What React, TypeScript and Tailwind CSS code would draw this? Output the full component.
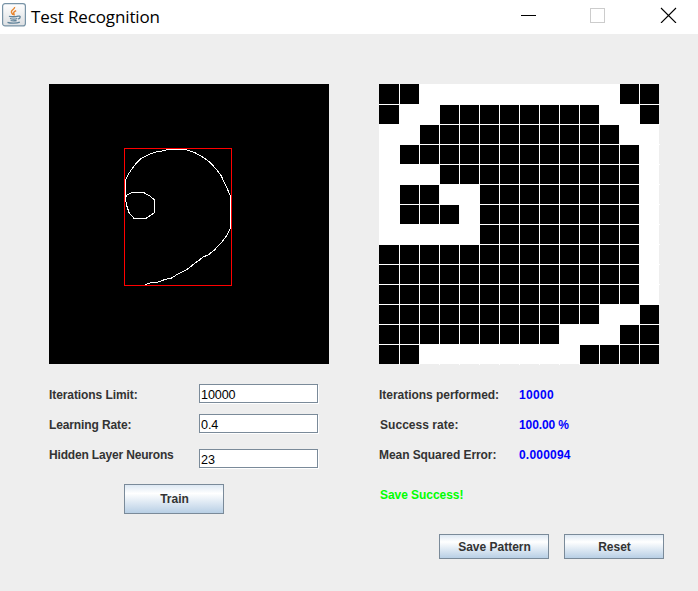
import type { ReactNode } from "react";

const pattern = [
  "..##########..",
  ".##........##.",
  "##..........##",
  "#............#",
  "###..........#",
  "#..##........#",
  "#...#........#",
  "#####........#",
  ".............#",
  ".............#",
  ".............#",
  "...........##.",
  ".........###..",
  "..########....",
];

const gridLines = Array.from({ length: 13 }, (_, i) => (i + 1) * 20);

function JavaIcon() {
  return (
    <svg className="size-6 shrink-0" viewBox="0 0 24 24" fill="none">
      <defs>
        <linearGradient id="tile" x1="0" y1="0" x2="0" y2="1">
          <stop offset="0" stopColor="#ffffff" />
          <stop offset="1" stopColor="#dcdfe2" />
        </linearGradient>
      </defs>
      <rect x="0.6" y="0.6" width="22.8" height="22.3" rx="2.5" fill="url(#tile)" stroke="#7893a6" strokeWidth="1.2" />
      <path d="M12.6 4c.5 2-3.4 3-3.2 5 .1 1.2 1.3 1.8 1.5 3M14.2 7.6c-1.8.8-3 1.5-2.5 2.7.3.8.9 1 .2 2.2" stroke="#e8852d" strokeWidth="1.4" />
      <path d="M7 13.2c1.5.8 7 .7 9 0M8 15.5c2 .7 5.5.6 7.3 0M8.6 17.5c2 .6 4 .5 6 0M5.5 19.3c3 1.2 9.5 1.1 12.3-.2M16 13.2c2.6-.8 3.2 1.7.2 3" stroke="#5f8299" strokeWidth="1.3" />
    </svg>
  );
}

function TitleBar() {
  return (
    <header className="flex h-[34px] items-start bg-white pl-[2px]">
      <div className="pt-[3px]">
        <JavaIcon />
      </div>
      <h1 className="ml-[5px] pt-[4px] font-['Open_Sans',sans-serif] text-[17px] leading-[26px] font-normal tracking-[-0.12px] whitespace-nowrap text-black">
        Test Recognition
      </h1>
      <svg className="mt-[7px] mr-[21px] ml-auto h-4 w-[157px]" viewBox="0 0 157 16" fill="none">
        <path d="M1 8.5h15" stroke="#000" shapeRendering="crispEdges" />
        <rect x="70.5" y="1.5" width="14" height="14" stroke="#ccc" shapeRendering="crispEdges" />
        <path d="M141 1l15 15M156 1l-15 15" stroke="#000" strokeWidth="1.1" />
      </svg>
    </header>
  );
}

function DrawingCanvas() {
  return (
    <svg className="block size-[280px] bg-black" viewBox="49 84 280 280" fill="none" shapeRendering="crispEdges">
      <g stroke="#fff">
        <polyline points="126,198 125.5,193 125.5,180 128.5,174 131.5,169.5 135.7,164 138.5,161 141.7,158 146,156 150,154 155.7,152 162,151 168,149.5 185.7,149.5 190,151 195,152.7 199,155 202,156.7 207,160 211.7,164 215,168 218.5,172 221.5,176 222.5,179 225,184 227,188 229,193 230.5,196 230.5,228 228,233 225.7,237 222,242 218,246 214.5,250 210,253.5 207.5,255.5 203.5,256.5 199,260.5 195,263 191,266.5 186,270 181.7,272 177,274.5 174,276.5 171.5,278 165,279.5 158,282 150,283 145.5,284.5" />
        <polyline points="125.5,198 127,195 131.7,192.5 143.5,192.5 150,196 154.5,200 154.5,212.7 150,215.7 145.7,218.5 134,218.5 129,212.5 126.5,205 125.5,198" />
      </g>
      <rect x="124.5" y="148.5" width="107" height="137" stroke="#f00" />
    </svg>
  );
}

function PatternGrid() {
  return (
    <svg className="-mr-px -mb-px block size-[281px]" viewBox="0 0 281 281" shapeRendering="crispEdges">
      <rect width="280" height="280" fill="#000" />
      {pattern.flatMap((row, y) =>
        [...row].map((cell, x) =>
          cell === "#" ? <rect key={`${x}-${y}`} x={x * 20} y={y * 20} width="20" height="20" fill="#fff" /> : null,
        ),
      )}
      {gridLines.map((p) => (
        <path key={p} d={`M${p + 0.5} 0v281M0 ${p + 0.5}h281`} stroke="#fff" />
      ))}
    </svg>
  );
}

function Field({ label, value, tracking, offset }: { label: string; value: string; tracking: string; offset?: boolean }) {
  return (
    <div className="flex h-[30px] items-start">
      <label className={`w-[150px] pt-[4px] leading-[14px] ${tracking}`}>{label}</label>
      <div className={offset ? "pt-[5px]" : ""}>
        <input
          readOnly
          aria-label={label}
          value={value}
          className="block h-[19px] w-[119px] border border-[#7a8a99] bg-white pt-[2px] pl-[1px] text-[12.6px] leading-4 font-normal tracking-[-0.1px] text-black shadow-[1px_1px_0_#fff] outline-none"
        />
      </div>
    </div>
  );
}

function Stat({ label, value, labelStyle, valueStyle }: { label: string; value: string; labelStyle: string; valueStyle: string }) {
  return (
    <div className="flex h-[30px] items-start pt-[4px] leading-[14px]">
      <span className={`w-[140px] ${labelStyle}`}>{label}</span>
      <span className={`text-[#0000ff] ${valueStyle}`}>{value}</span>
    </div>
  );
}

function Button({ size, children }: { size: string; children: ReactNode }) {
  return (
    <button
      className={`${size} flex items-center justify-center border border-[#7a8a99] bg-linear-to-b from-[#dde8f3] via-white via-30% to-[#b8cfe5] pl-px leading-[14px] font-bold`}
    >
      {children}
    </button>
  );
}

export default function App() {
  return (
    <div className="h-[591px] w-[698px] overflow-hidden bg-[#eee] font-['Liberation_Sans',Arial,sans-serif] text-[12px] font-bold whitespace-nowrap text-[#333]">
      <TitleBar />
      <main className="flex gap-[50px] pt-[50px] pl-[49px]">
        <section className="w-[280px]">
          <DrawingCanvas />
          <form className="pt-5">
            <Field label="Iterations Limit:" value="10000" tracking="tracking-[-0.08px]" />
            <Field label="Learning Rate:" value="0.4" tracking="tracking-[-0.12px]" />
            <Field label="Hidden Layer Neurons" value="23" tracking="tracking-[-0.17px]" offset />
          </form>
          <div className="pt-[10px] pl-[75px]">
            <Button size="h-[30px] w-[100px]">Train</Button>
          </div>
        </section>
        <section className="w-[285px]">
          <PatternGrid />
          <div className="pt-5">
            <Stat label="Iterations performed:" value="10000" labelStyle="tracking-[-0.03px]" valueStyle="tracking-[0.3px]" />
            <Stat label="Success rate:" value="100.00 %" labelStyle="pl-px tracking-[0.04px]" valueStyle="tracking-[-0.1px]" />
            <Stat label="Mean Squared Error:" value="0.000094" labelStyle="tracking-[-0.07px]" valueStyle="tracking-[0.2px]" />
          </div>
          <p className="pt-[14px] pl-px leading-[14px] tracking-[-0.05px] text-[#00ff00]">Save Success!</p>
          <div className="flex justify-end gap-[15px] pt-8">
            <Button size="h-[25px] w-[110px]">Save Pattern</Button>
            <Button size="h-[25px] w-[100px]">Reset</Button>
          </div>
        </section>
      </main>
    </div>
  );
}
